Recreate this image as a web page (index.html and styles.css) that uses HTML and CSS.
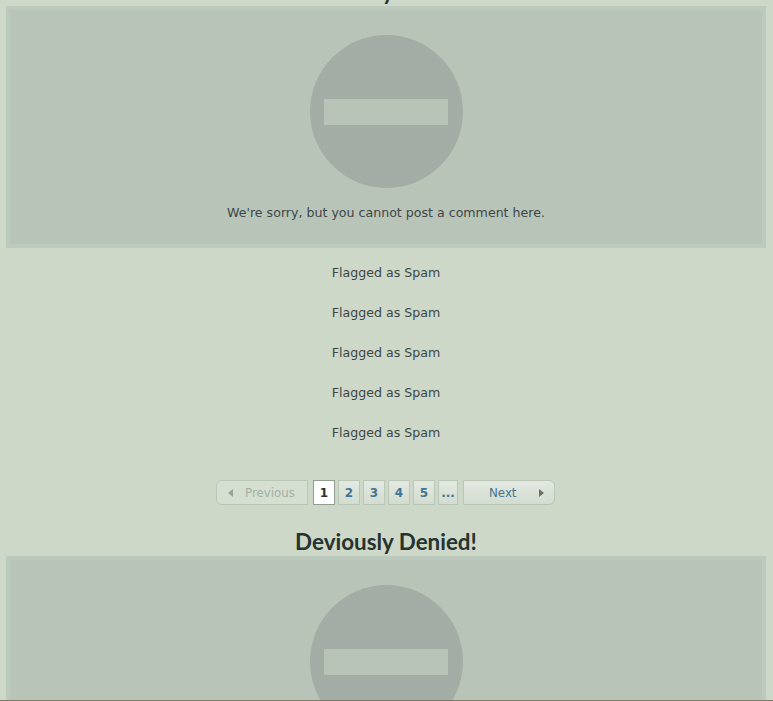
FILE: index.html
```html
<!DOCTYPE html>
<html lang="en">
<head>
<meta charset="utf-8">
<title>Deviously Denied</title>
<link rel="stylesheet" href="styles.css">
</head>
<body>
<main class="page">
  <section class="denied">
    <h2 class="denied-title">Deviously Denied!</h2>
    <div class="denied-box">
      <svg class="no-entry" viewBox="0 0 153 153" width="153" height="153" aria-hidden="true">
        <circle cx="76.5" cy="76.5" r="76.5" fill="#a3aca5"/>
        <rect x="14" y="64" width="124" height="26" fill="#b9c4b9"/>
      </svg>
      <p class="denied-text">We're sorry, but you cannot post a comment here.</p>
    </div>
  </section>
  <ul class="flags">
    <li>Flagged as Spam</li>
    <li>Flagged as Spam</li>
    <li>Flagged as Spam</li>
    <li>Flagged as Spam</li>
    <li>Flagged as Spam</li>
  </ul>
  <nav class="pager">
    <a class="pg-wide pg-prev"><svg class="arrow" viewBox="0 0 5 8" width="5" height="8"><path d="M5 0v8L0 4z"/></svg><span>Previous</span></a>
    <a class="pg-num pg-current">1</a>
    <a class="pg-num">2</a>
    <a class="pg-num">3</a>
    <a class="pg-num">4</a>
    <a class="pg-num">5</a>
    <a class="pg-num pg-more">...</a>
    <a class="pg-wide pg-next"><span>Next</span><svg class="arrow" viewBox="0 0 5 8" width="5" height="8"><path d="M0 0v8l5-4z"/></svg></a>
  </nav>
  <section class="denied">
    <h2 class="denied-title">Deviously Denied!</h2>
    <div class="denied-box">
      <svg class="no-entry" viewBox="0 0 153 153" width="153" height="153" aria-hidden="true">
        <circle cx="76.5" cy="76.5" r="76.5" fill="#a3aca5"/>
        <rect x="14" y="64" width="124" height="26" fill="#b9c4b9"/>
      </svg>
      <p class="denied-text">We're sorry, but you cannot post a comment here.</p>
    </div>
  </section>
</main>
<div class="footer-line"></div>
</body>
</html>
```
FILE: styles.css
```css
html, body {
  margin: 0;
  height: 701px;
  overflow: hidden;
  background: #cdd8c8;
}
body {
  position: relative;
  font-family: "DejaVu Sans", sans-serif;
  font-size: 12.6px;
  color: #3d4747;
}
.page {
  margin-top: -24px;
  padding: 0 7px 0 6px;
}
.denied-title {
  margin: 0;
  height: 30px;
  line-height: 32px;
  text-align: center;
  font-family: "Lato", sans-serif;
  font-weight: 700;
  font-size: 22.4px;
  color: #26332f;
}
.denied-box {
  box-sizing: border-box;
  height: 242px;
  border: 4px solid #bbcabd;
  background: #b9c4b9;
  padding-top: 25px;
  text-align: center;
}
.no-entry {
  display: block;
  margin: 0 auto;
}
.denied-text {
  margin: 17px 0 0;
  line-height: 16px;
}
.flags {
  list-style: none;
  margin: 0;
  padding: 5px 0 0;
  text-align: center;
}
.flags li {
  height: 40px;
  line-height: 40px;
}
.pager {
  display: flex;
  justify-content: center;
  gap: 3px;
  margin-top: 27px;
  padding-right: 1px;
  height: 25px;
  margin-bottom: 21px;
}
.pager a {
  box-sizing: border-box;
  display: flex;
  align-items: center;
  justify-content: center;
  height: 25px;
  border: 1px solid #b9c6b6;
  background: linear-gradient(#e3e9e1, #d3dcd0);
  color: #3f7592;
}
.pg-num {
  width: 22px;
  font-weight: 700;
  font-size: 12px;
}
.pager .pg-current {
  background: #fff;
  border-color: #8f9e8e;
  color: #26332f;
}
.pager .pg-more { width: 20px; }
.pager .pg-wide {
  width: 92px;
  justify-content: flex-start;
  font-size: 11.8px;
}
.pager .pg-prev {
  margin-right: 2px;
  border-radius: 6px 0 0 6px;
  background: #d4dfd1;
  color: #a3b1a3;
  padding-left: 11px;
  gap: 12px;
}
.pager .pg-next {
  margin-left: 2px;
  border-radius: 0 6px 6px 0;
  padding-left: 25px;
  gap: 23px;
}
.arrow { fill: #66736a; flex: none; }
.pg-prev .arrow { fill: #95a395; }
.footer-line {
  position: absolute;
  left: 0;
  right: 0;
  bottom: 0;
  height: 1px;
  background: #7d7a68;
}
```
